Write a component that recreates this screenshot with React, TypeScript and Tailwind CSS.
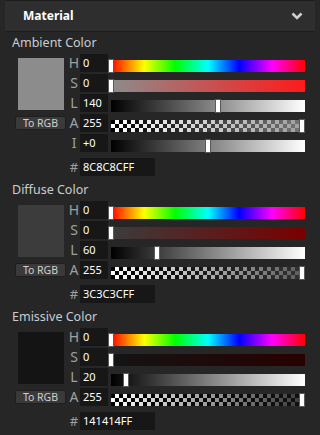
import { FunctionComponent } from "react";

type Channel = {
  label: string;
  value: string;
  frac: number;
  track: string;
  checker?: boolean;
};

type ColorSection = {
  title: string;
  swatch: string;
  hex: string;
  channels: Channel[];
};

const HUE =
  "linear-gradient(to right, #ff0000, #ffff00 17%, #00ff00 33%, #00ffff 50%, #0000ff 66%, #ff00ff 83%, #ff0000)";
const GRAY = "linear-gradient(to right, #000000, #ffffff)";

const sections: ColorSection[] = [
  {
    title: "Ambient Color",
    swatch: "#8c8c8c",
    hex: "8C8C8CFF",
    channels: [
      { label: "H", value: "0", frac: 0, track: HUE },
      { label: "S", value: "0", frac: 0, track: "linear-gradient(to right, #8c8c8c, #ff1a1a)" },
      { label: "L", value: "140", frac: 140 / 255, track: GRAY },
      { label: "A", value: "255", frac: 1, track: "linear-gradient(to right, rgba(140,140,140,0), rgba(140,140,140,0.85))", checker: true },
      { label: "I", value: "+0", frac: 0.5, track: GRAY },
    ],
  },
  {
    title: "Diffuse Color",
    swatch: "#3c3c3c",
    hex: "3C3C3CFF",
    channels: [
      { label: "H", value: "0", frac: 0, track: HUE },
      { label: "S", value: "0", frac: 0, track: "linear-gradient(to right, #3c3c3c, #780000)" },
      { label: "L", value: "60", frac: 60 / 255, track: GRAY },
      { label: "A", value: "255", frac: 1, track: "linear-gradient(to right, rgba(60,60,60,0), rgba(60,60,60,0.85))", checker: true },
    ],
  },
  {
    title: "Emissive Color",
    swatch: "#141414",
    hex: "141414FF",
    channels: [
      { label: "H", value: "0", frac: 0, track: HUE },
      { label: "S", value: "0", frac: 0, track: "linear-gradient(to right, #141414, #280000)" },
      { label: "L", value: "20", frac: 20 / 255, track: GRAY },
      { label: "A", value: "255", frac: 1, track: "linear-gradient(to right, rgba(20,20,20,0), rgba(20,20,20,0.85))", checker: true },
    ],
  },
];

const TRACK_W = 194;

const Slider: FunctionComponent<{ channel: Channel }> = ({ channel }) => {
  const left = Math.min(Math.max(channel.frac * TRACK_W - 3, -3), TRACK_W - 6);
  return (
    <div className="relative mt-[6px] h-[12px] w-[194px]">
      <div
        className={
          channel.checker
            ? "h-full w-full bg-[conic-gradient(#ffffff_25%,#000000_0_50%,#ffffff_0_75%,#000000_0)] bg-[length:8px_8px]"
            : "h-full w-full"
        }
      >
        <div className="h-full w-full" style={{ backgroundImage: channel.track }} />
      </div>
      <div
        className="absolute top-[-1px] h-[14px] w-[6px] border border-[#5a5a5a] bg-white"
        style={{ left }}
      />
    </div>
  );
};

const Section: FunctionComponent<{ section: ColorSection }> = ({ section }) => {
  return (
    <div className="flex flex-col">
      <p className="h-[16px] pl-[7px] text-[12.5px] leading-[16px] text-[#c8cdd2]">
        {section.title}
      </p>
      <div className="mt-[3px] flex items-start">
        <div className="flex w-[63px] flex-col">
          <div className="ml-[13px] mt-[4px] h-[52px] w-[46px]" style={{ backgroundColor: section.swatch }} />
          <button className="ml-[10px] mt-[6px] h-[14px] w-[51px] rounded-[2px] border border-[#1e1e1e] bg-[#3a3a3a] text-[10.5px] leading-[12px] text-[#d0d0d0]">
            To RGB
          </button>
        </div>
        <div className="flex flex-col gap-[2px]">
          {section.channels.map((channel) => (
            <div key={channel.label} className="flex h-[18px] items-start">
              <span className="w-[12px] text-center text-[14px] leading-[18px] text-[#a0a0a0]">
                {channel.label}
              </span>
              <span className="h-[18px] w-[28px] bg-[#171717] pl-[3px] text-[11px] leading-[18px] text-white">
                {channel.value}
              </span>
              <div className="ml-[3px]">
                <Slider channel={channel} />
              </div>
            </div>
          ))}
          <div className="mt-[4px] flex h-[18px] items-start">
            <span className="w-[12px] text-center text-[13px] leading-[18px] text-[#a0a0a0]">#</span>
            <span className="h-[18px] w-[75px] bg-[#171717] pl-[3px] text-[11px] leading-[18px] text-white">
              {section.hex}
            </span>
          </div>
        </div>
      </div>
    </div>
  );
};

export default function App() {
  return (
    <div className="h-[435px] w-[320px] overflow-hidden bg-[#262626] px-[5px] font-['Noto_Sans',sans-serif]">
      <div className="flex h-[32px] items-center justify-between border-y border-[#1c1c1c] bg-[#2e2e2e] pl-[18px] pr-[12px]">
        <span className="text-[12px] font-bold text-white">Material</span>
        <svg width="12" height="8" viewBox="0 0 12 8">
          <polyline points="1.5,1.5 6,6 10.5,1.5" fill="none" stroke="#cfcfcf" strokeWidth="2.6" />
        </svg>
      </div>
      <div className="mt-[3px] flex flex-col gap-[6px]">
        {sections.map((section) => (
          <Section key={section.title} section={section} />
        ))}
      </div>
    </div>
  );
}
